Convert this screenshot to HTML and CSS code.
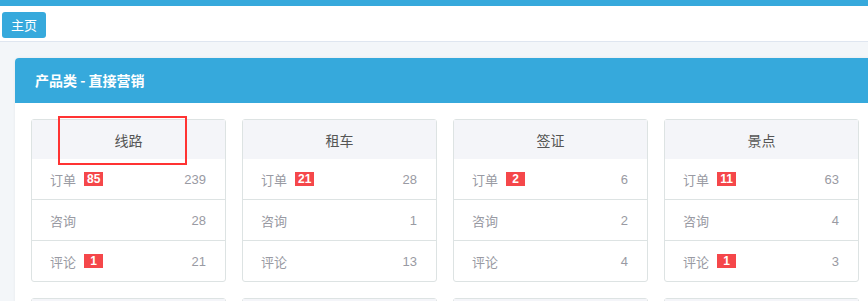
FILE: index.html
```html
<!DOCTYPE html>
<html lang="zh-CN">
<head>
  <meta charset="UTF-8">
  <title>产品类 - 直接营销</title>
  <link rel="stylesheet" href="styles.css">
</head>
<body>

  <div class="top-bar"></div>
  <div class="tab-bar">
    <a class="tab-btn">主页</a>
  </div>

  <div class="content">
    <div class="panel">
      <div class="panel-head">产品类 - 直接营销</div>
      <div class="panel-body">

        <div class="card">
          <div class="card-title">线路</div>
          <div class="row"><span class="label">订单<em class="badge">85</em></span><span class="num">239</span></div>
          <div class="row"><span class="label">咨询</span><span class="num">28</span></div>
          <div class="row"><span class="label">评论<em class="badge">1</em></span><span class="num">21</span></div>
          <div class="mark"></div>
        </div>

        <div class="card">
          <div class="card-title">租车</div>
          <div class="row"><span class="label">订单<em class="badge">21</em></span><span class="num">28</span></div>
          <div class="row"><span class="label">咨询</span><span class="num">1</span></div>
          <div class="row"><span class="label">评论</span><span class="num">13</span></div>
        </div>

        <div class="card">
          <div class="card-title">签证</div>
          <div class="row"><span class="label">订单<em class="badge">2</em></span><span class="num">6</span></div>
          <div class="row"><span class="label">咨询</span><span class="num">2</span></div>
          <div class="row"><span class="label">评论</span><span class="num">4</span></div>
        </div>

        <div class="card">
          <div class="card-title">景点</div>
          <div class="row"><span class="label">订单<em class="badge">11</em></span><span class="num">63</span></div>
          <div class="row"><span class="label">咨询</span><span class="num">4</span></div>
          <div class="row"><span class="label">评论<em class="badge">1</em></span><span class="num">3</span></div>
        </div>

        <div class="card"><div class="card-title"></div></div>
        <div class="card"><div class="card-title"></div></div>
        <div class="card"><div class="card-title"></div></div>
        <div class="card"><div class="card-title"></div></div>

      </div>
    </div>
  </div>

</body>
</html>
```

FILE: styles.css
```css
body { margin: 0; font-family: "Microsoft YaHei", "Noto Sans CJK SC", sans-serif; background-color: #f3f6f9; overflow: hidden; width: 868px; height: 301px; }
.top-bar { height: 6px; background-color: #36a9dc; }
.tab-bar { height: 36px; background: #fff; border-bottom: 1px solid #dfe6f0; box-sizing: border-box; padding: 5px 2px; }
.tab-btn { display: inline-block; width: 44px; height: 26px; line-height: 26px; text-align: center; background-color: #36a9dc; color: #fff; font-size: 13px; border-radius: 3px; }
.content { padding: 16px 0 0 15px; width: 900px; }
.panel { width: 860px; background: #fff; border-radius: 4px 4px 0 0; box-shadow: 0 0 3px rgba(0,0,0,0.06); }
.panel-head { height: 45px; line-height: 44px; padding-left: 20px; background-color: #36a9dc; color: #fff; font-size: 14px; font-weight: bold; border-radius: 4px 4px 0 0; }
.panel-body { display: grid; grid-template-columns: repeat(4, 195px); column-gap: 16px; row-gap: 16px; padding: 16px; }
.card { position: relative; border: 1px solid #dde3e3; border-radius: 3px; background: #fff; }
.card-title { height: 39px; line-height: 40px; text-align: center; background-color: #f4f5f9; color: #555; font-size: 14px; }
.row { display: flex; justify-content: space-between; align-items: center; height: 40px; border-top: 1px solid #dde3e3; padding: 0 19px 0 18px; color: #999aa3; font-size: 13px; }
.card-title + .row { border-top: none; }
.label { display: flex; align-items: center; }
.badge { font-style: normal; display: inline-block; margin-left: 8px; padding: 0 3px; min-width: 13px; height: 14px; line-height: 14px; text-align: center; background-color: #f5474a; color: #fff; font-weight: bold; font-size: 12px; font-family: "Liberation Sans", Arial, sans-serif; }
.num { font-family: "Liberation Sans", Arial, sans-serif; font-size: 13px; }
.mark { position: absolute; left: 26px; top: -4px; width: 125px; height: 45px; border: 2px solid #f33; }
```
